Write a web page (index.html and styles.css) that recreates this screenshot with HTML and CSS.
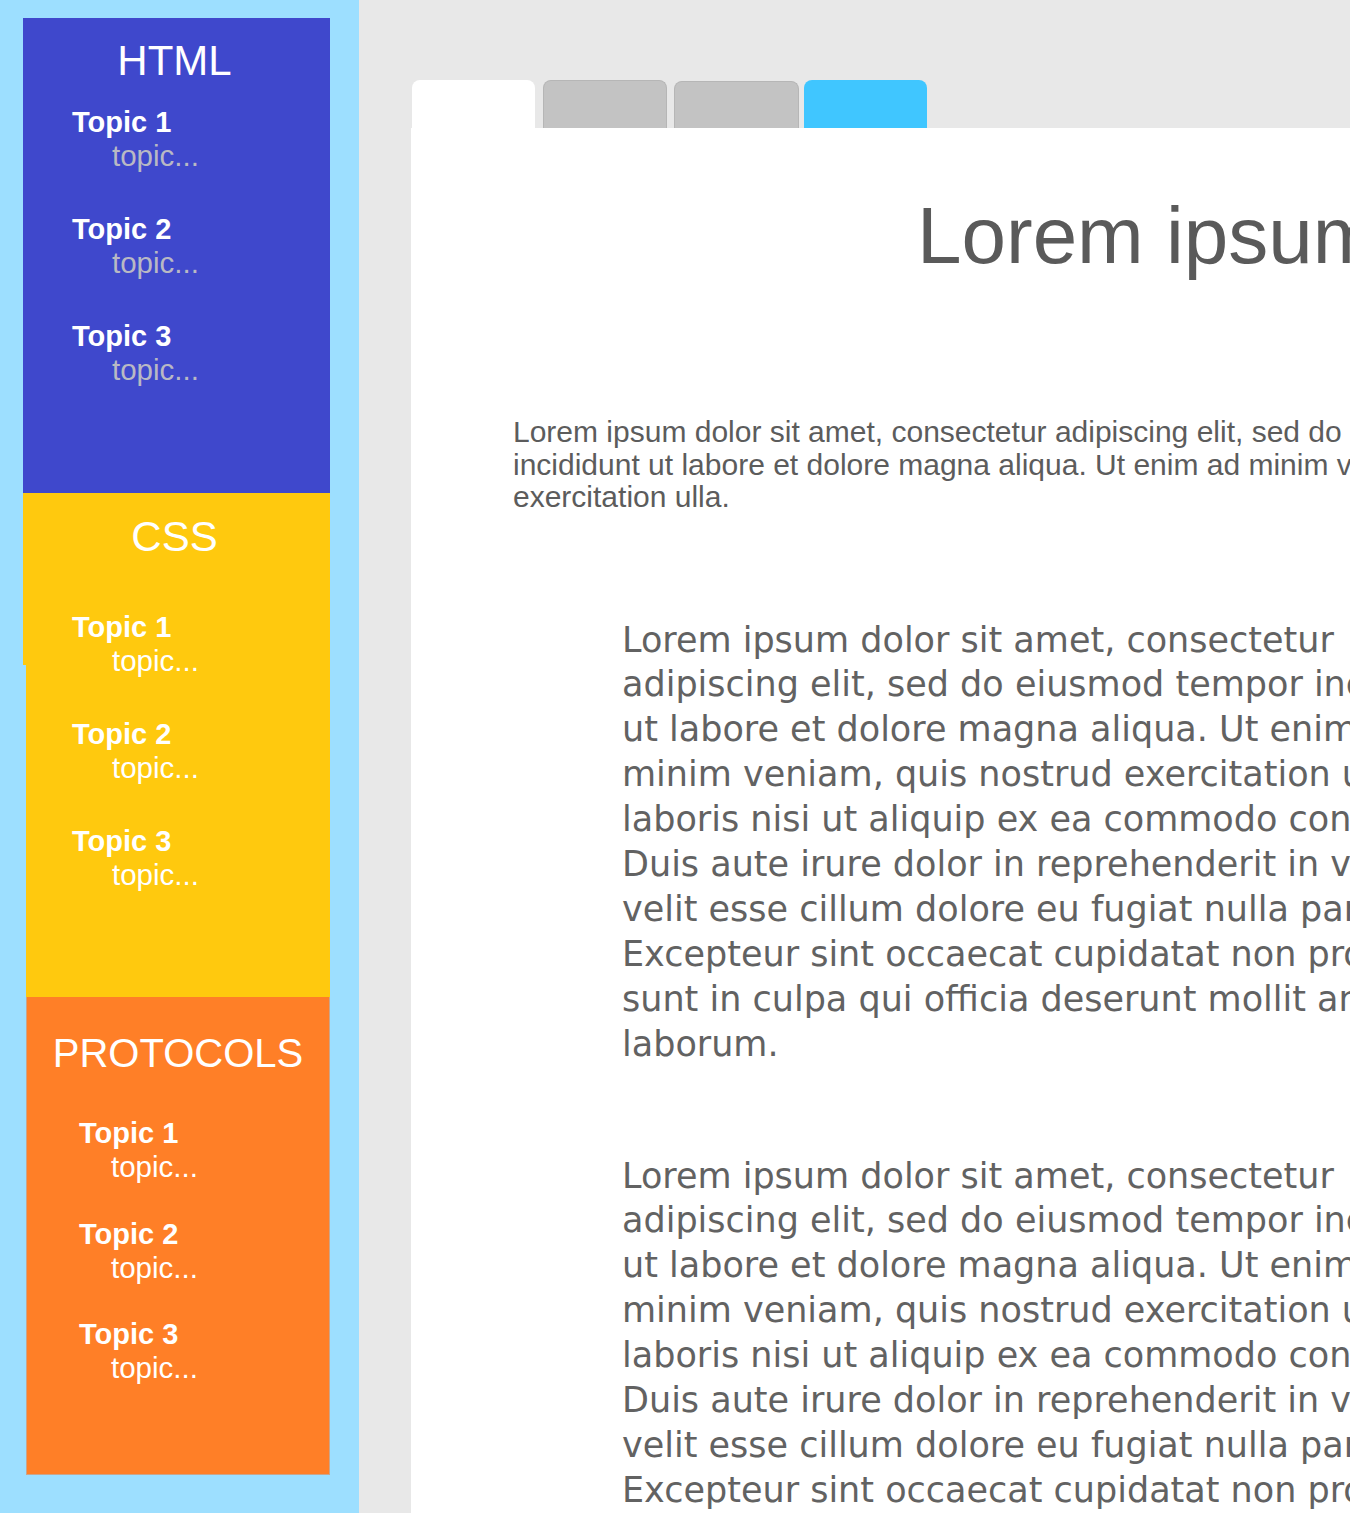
FILE: index.html
```html
<!DOCTYPE html>
<html lang="en">
<head>
<meta charset="utf-8">
<title>Topics</title>
<link rel="stylesheet" href="styles.css">
</head>
<body>
<div class="page">
  <aside class="sidebar">
    <section class="cat cat-html">
      <h2 class="cat-title">HTML</h2>
      <ul class="topics">
        <li class="topic"><span class="topic-name">Topic 1</span><span class="topic-desc">topic...</span></li>
        <li class="topic"><span class="topic-name">Topic 2</span><span class="topic-desc">topic...</span></li>
        <li class="topic"><span class="topic-name">Topic 3</span><span class="topic-desc">topic...</span></li>
      </ul>
    </section>
    <section class="cat cat-css">
      <h2 class="cat-title">CSS</h2>
      <ul class="topics">
        <li class="topic"><span class="topic-name">Topic 1</span><span class="topic-desc">topic...</span></li>
        <li class="topic"><span class="topic-name">Topic 2</span><span class="topic-desc">topic...</span></li>
        <li class="topic"><span class="topic-name">Topic 3</span><span class="topic-desc">topic...</span></li>
      </ul>
    </section>
    <section class="cat cat-protocols">
      <h2 class="cat-title">PROTOCOLS</h2>
      <ul class="topics">
        <li class="topic"><span class="topic-name">Topic 1</span><span class="topic-desc">topic...</span></li>
        <li class="topic"><span class="topic-name">Topic 2</span><span class="topic-desc">topic...</span></li>
        <li class="topic"><span class="topic-name">Topic 3</span><span class="topic-desc">topic...</span></li>
      </ul>
    </section>
  </aside>
  <main class="main">
    <nav class="tabs">
      <span class="tab tab-active"></span>
      <span class="tab tab-gray tab-2"></span>
      <span class="tab tab-gray tab-3"></span>
      <span class="tab tab-blue"></span>
    </nav>
    <article class="panel">
      <h1 class="panel-title">Lorem ipsum</h1>
      <p class="intro">
        <span class="line">Lorem ipsum dolor sit amet, consectetur adipiscing elit, sed do eiusmod tempor</span>
        <span class="line">incididunt ut labore et dolore magna aliqua. Ut enim ad minim veniam, quis nostrud</span>
        <span class="line">exercitation ulla.</span>
      </p>
      <p class="body-text">
        <span class="line">Lorem ipsum dolor sit amet, consectetur</span>
        <span class="line">adipiscing elit, sed do eiusmod tempor incididunt</span>
        <span class="line">ut labore et dolore magna aliqua. Ut enim ad</span>
        <span class="line">minim veniam, quis nostrud exercitation ullamco</span>
        <span class="line">laboris nisi ut aliquip ex ea commodo consequat.</span>
        <span class="line">Duis aute irure dolor in reprehenderit in voluptate</span>
        <span class="line">velit esse cillum dolore eu fugiat nulla pariatur.</span>
        <span class="line">Excepteur sint occaecat cupidatat non proident,</span>
        <span class="line">sunt in culpa qui officia deserunt mollit anim id est</span>
        <span class="line">laborum.</span>
      </p>
      <p class="body-text body-text-2">
        <span class="line">Lorem ipsum dolor sit amet, consectetur</span>
        <span class="line">adipiscing elit, sed do eiusmod tempor incididunt</span>
        <span class="line">ut labore et dolore magna aliqua. Ut enim ad</span>
        <span class="line">minim veniam, quis nostrud exercitation ullamco</span>
        <span class="line">laboris nisi ut aliquip ex ea commodo consequat.</span>
        <span class="line">Duis aute irure dolor in reprehenderit in voluptate</span>
        <span class="line">velit esse cillum dolore eu fugiat nulla pariatur.</span>
        <span class="line">Excepteur sint occaecat cupidatat non proident,</span>
        <span class="line">sunt in culpa qui officia deserunt mollit anim id est</span>
        <span class="line">laborum.</span>
      </p>
    </article>
  </main>
</div>
</body>
</html>
```
FILE: styles.css
```css
* {
  box-sizing: border-box;
}

html, body {
  margin: 0;
  padding: 0;
  overflow: hidden;
}

body {
  font-family: "Liberation Sans", Arial, sans-serif;
  background: #e8e8e8;
}

.page {
  display: flex;
  height: 1513px;
  overflow: hidden;
}

/* ---------- Sidebar ---------- */
.sidebar {
  flex: 0 0 359px;
  width: 359px;
  background: #9ddfff;
  padding: 18px 0 0 23px;
  display: flex;
  flex-direction: column;
}

.cat {
  color: #ffffff;
}

.cat-title {
  margin: 0;
  font-weight: normal;
  font-size: 42px;
  line-height: 42px;
  text-align: center;
}

.topics {
  list-style: none;
  margin: 0;
  padding: 0;
  display: flex;
  flex-direction: column;
  gap: 41px;
}

.topic {
  display: flex;
  flex-direction: column;
  align-items: flex-start;
}

.topic-name {
  font-weight: bold;
  font-size: 29px;
  line-height: 33px;
}

.topic-desc {
  font-size: 29.5px;
  line-height: 33px;
  margin-left: 40px;
}

.cat-html {
  width: 307px;
  height: 475px;
  background: #3f48cc;
  padding: 22px 0 0 49px;
}
.cat-html .cat-title {
  margin-left: -49px;
  padding-right: 4px;
}
.cat-html .topics {
  margin-top: 24px;
}
.cat-html .topic-desc {
  color: #b9b9c4;
}

.cat-css {
  position: relative;
  width: 307px;
  height: 504px;
  background: #ffc90e;
  padding: 23px 0 0 49px;
}
.cat-css::before {
  content: "";
  position: absolute;
  left: 0;
  top: 172px;
  bottom: 0;
  width: 3px;
  background: #9ddfff;
}
.cat-css .cat-title {
  margin-left: -49px;
  padding-right: 4px;
}
.cat-css .topics {
  margin-top: 53px;
}

.cat-protocols {
  width: 304px;
  height: 478px;
  margin-left: 3px;
  background: #ff7f27;
  border: 1px solid #c9a58c;
  border-top: none;
  padding: 35px 0 0 52px;
}
.cat-protocols .cat-title {
  margin-left: -52px;
  font-size: 40px;
}
.cat-protocols .topics {
  margin-top: 43px;
  gap: 34.5px;
}
.cat-protocols .topic-desc {
  margin-left: 32px;
}

/* ---------- Main ---------- */
.main {
  flex: 1 1 auto;
  min-width: 0;
  display: flex;
  flex-direction: column;
  background: #e8e8e8;
  padding-top: 80px;
}

.tabs {
  display: flex;
  align-items: flex-start;
  height: 48px;
  padding-left: 53px;
}

.tab {
  display: block;
  height: 48px;
  border-radius: 8px 8px 0 0;
}

.tab-active {
  width: 123px;
  background: #ffffff;
}

.tab-gray {
  background: #c3c3c3;
  border: 1px solid #b6b6b6;
  border-bottom: none;
}

.tab-2 {
  width: 124px;
  margin-left: 8px;
}

.tab-3 {
  width: 125px;
  height: 47px;
  margin-top: 1px;
  margin-left: 7px;
}

.tab-blue {
  width: 123px;
  margin-left: 5px;
  background: #40c6ff;
}

.panel {
  flex: 1 1 auto;
  margin-left: 52px;
  background: #ffffff;
  overflow: hidden;
  padding-top: 68px;
}

.panel-title {
  margin: 0;
  padding-left: 506px;
  font-weight: normal;
  font-size: 80px;
  line-height: 80px;
  color: #5a5a5a;
  white-space: nowrap;
}

.line {
  display: block;
  white-space: nowrap;
}

.intro {
  margin: 140px 0 0;
  padding-left: 102px;
  font-size: 30px;
  line-height: 32.5px;
  color: #5c5c5c;
}

.body-text {
  margin: 104px 0 0;
  padding-left: 211px;
  font-family: "DejaVu Sans", "Liberation Sans", sans-serif;
  font-size: 35px;
  line-height: 44.9px;
  color: #626262;
}

.body-text-2 {
  margin-top: 87px;
}
```
